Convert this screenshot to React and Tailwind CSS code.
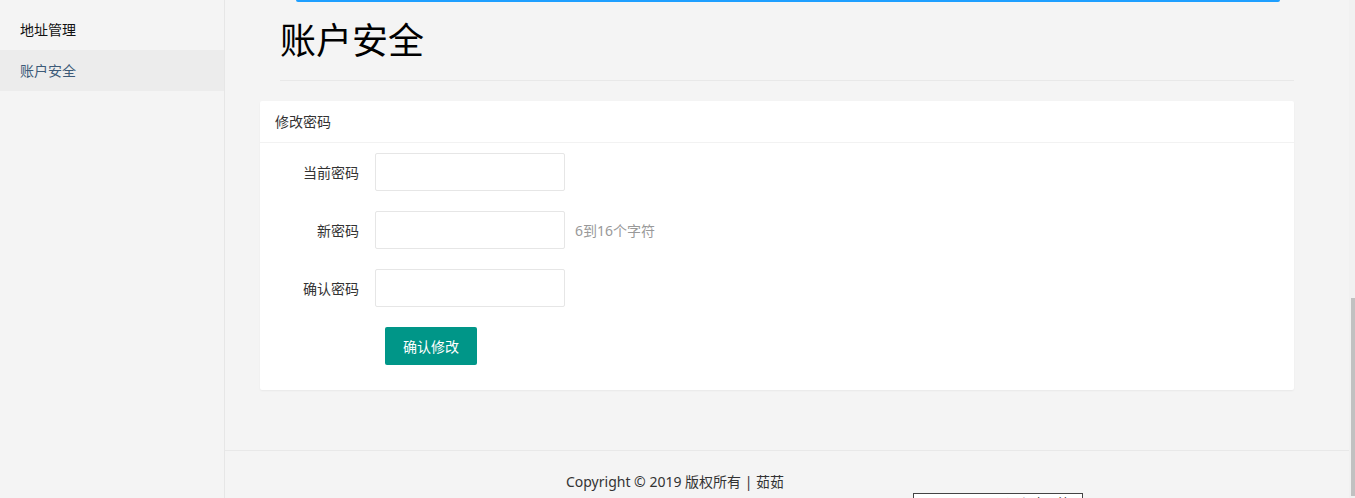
import { useState } from 'react'

const FIELDS = [
  { key: 'old', label: '当前密码' },
  { key: 'new', label: '新密码', hint: '6到16个字符' },
  { key: 'confirm', label: '确认密码' },
]

const MENU = [
  { key: 'address', label: '地址管理' },
  { key: 'security', label: '账户安全' },
]

export default function App() {
  const [active, setActive] = useState('security')
  const [form, setForm] = useState({ old: '', new: '', confirm: '' })

  return (
    <div
      className="flex h-[498px] w-[1355px] overflow-hidden bg-[#f4f4f4] text-[14px] text-[#333]"
      style={{ fontFamily: '"Noto Sans", "Noto Sans CJK SC", sans-serif' }}
    >
      {/* Sidebar */}
      <div className="w-[225px] shrink-0 border-r border-[#e6e6e6] pt-[9px]">
        {MENU.map(m => (
          <div
            key={m.key}
            onClick={() => setActive(m.key)}
            className={`h-[41px] px-5 leading-[41px] cursor-pointer
              ${active === m.key ? 'bg-[#ececec] text-[#3c5a78]' : 'text-[#111]'}`}
          >
            {m.label}
          </div>
        ))}
      </div>

      {/* Main */}
      <div className="flex min-w-0 flex-1 flex-col">
        <div className="ml-[71px] h-[2px] w-[984px] shrink-0 rounded-b-full bg-[#1E9FFF]" />

        <div className="pl-[35px] pr-[55px]">
          <div className="ml-5 border-b border-[#e8e8e8] pt-[17px] pb-[18px]">
            <h1 className="text-[36px] leading-[43px] text-black">账户安全</h1>
          </div>

          {/* Card */}
          <div className="mt-5 rounded-[2px] bg-white shadow-[0_1px_2px_rgba(0,0,0,0.05)]">
            <div className="h-[42px] border-b border-[#f2f2f2] px-[15px] leading-[42px] text-[#333]">
              修改密码
            </div>
            <div className="px-[15px] pt-[10px] pb-[25px]">
              {FIELDS.map(f => (
                <div key={f.key} className="mb-5 flex items-center">
                  <label className="w-[84px] text-right text-[#333]">{f.label}</label>
                  <input
                    type="password"
                    value={form[f.key]}
                    onChange={e => setForm({ ...form, [f.key]: e.target.value })}
                    className="ml-4 h-[38px] w-[190px] rounded-[2px] border border-[#e6e6e6] bg-white px-2 outline-none"
                  />
                  {f.hint && <span className="ml-[10px] text-[#999]">{f.hint}</span>}
                </div>
              ))}
              <button className="ml-[110px] h-[38px] w-[92px] rounded-[2px] bg-[#009688] text-white">
                确认修改
              </button>
            </div>
          </div>
        </div>

        {/* Footer */}
        <div className="mt-[60px] border-t border-[#e8e8e8] pr-[224px] pt-[20px] text-center text-[#333]">
          <div className="leading-[22px]">Copyright © 2019 版权所有 | 茹茹</div>
          <div className="relative h-[20px]">
            <span className="absolute left-[430px] top-[4px] text-[#333]">ICP备案</span>
            <div className="absolute left-[688px] top-[0px] h-[20px] w-[170px] border border-[#444] bg-white px-1 text-left text-[13px] leading-[18px]">
              39.107.14.26 - 远程桌面连接
            </div>
          </div>
        </div>
      </div>

      {/* Scrollbar */}
      <div className="w-[6px] shrink-0 bg-[#f1f1f1]">
        <div className="ml-[2px] mt-[298px] h-[198px] w-[4px] bg-[#c1c1c1]" />
      </div>
    </div>
  )
}
